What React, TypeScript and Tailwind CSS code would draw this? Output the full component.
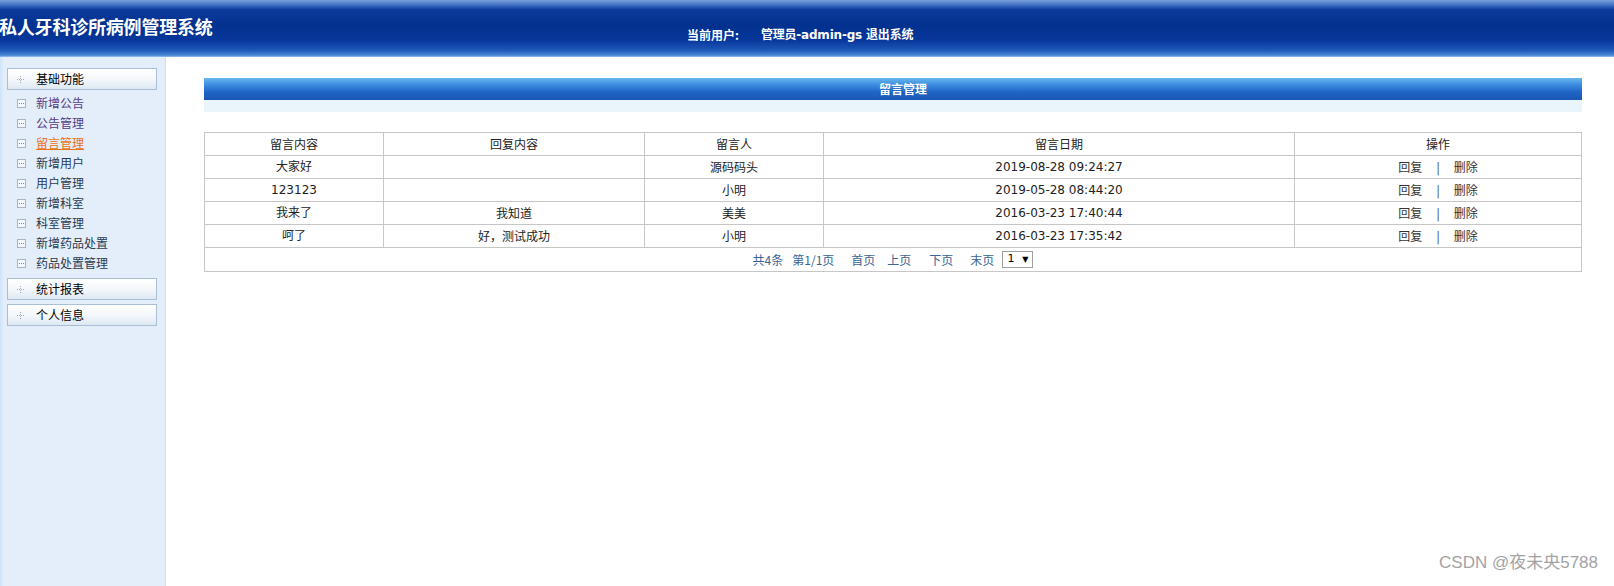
import React from "react";

const menuItems: { label: string; cls: string }[] = [
  { label: "新增公告", cls: "text-[#553c86]" },
  { label: "公告管理", cls: "text-[#553c86]" },
  { label: "留言管理", cls: "text-[#e8731a] underline" },
  { label: "新增用户", cls: "text-[#2b3a4f]" },
  { label: "用户管理", cls: "text-[#2b3a4f]" },
  { label: "新增科室", cls: "text-[#2b3a4f]" },
  { label: "科室管理", cls: "text-[#2b3a4f]" },
  { label: "新增药品处置", cls: "text-[#2b3a4f]" },
  { label: "药品处置管理", cls: "text-[#2b3a4f]" },
];

const rows = [
  { c: "大家好", r: "", p: "源码码头", d: "2019-08-28 09:24:27" },
  { c: "123123", r: "", p: "小明", d: "2019-05-28 08:44:20" },
  { c: "我来了", r: "我知道", p: "美美", d: "2016-03-23 17:40:44" },
  { c: "呵了", r: "好，测试成功", p: "小明", d: "2016-03-23 17:35:42" },
];

function PlusIcon() {
  return (
    <svg width="9" height="9" viewBox="0 0 9 9" className="shrink-0">
      <g fill="#a2aebb">
        <rect x="4" y="1" width="1" height="1" />
        <rect x="4" y="3" width="1" height="1" />
        <rect x="4" y="5" width="1" height="1" />
        <rect x="4" y="7" width="1" height="1" />
        <rect x="1" y="4" width="1" height="1" />
        <rect x="3" y="4" width="1" height="1" />
        <rect x="5" y="4" width="1" height="1" />
        <rect x="7" y="4" width="1" height="1" />
      </g>
    </svg>
  );
}

function LeafIcon() {
  return (
    <svg width="9" height="9" viewBox="0 0 9 9" className="shrink-0">
      <rect x="0.5" y="0.5" width="8" height="8" fill="#f4f8fc" stroke="#a6b4c4" />
      <g fill="#7a8898">
        <rect x="2" y="4" width="1" height="1" />
        <rect x="4" y="4" width="1" height="1" />
        <rect x="6" y="4" width="1" height="1" />
      </g>
    </svg>
  );
}

function GroupHeader({ label }: { label: string }) {
  return (
    <div className="ml-[7px] flex h-[22px] w-[150px] items-center border border-[#a8bfd6] bg-[linear-gradient(to_bottom,#ffffff_0%,#f3f7fb_55%,#dde8f3_100%)] pl-[8px] text-[12px] text-black">
      <PlusIcon />
      <span className="ml-[11px]">{label}</span>
    </div>
  );
}

export default function App() {
  const cjk = "font-['Noto_Sans_CJK_SC','Noto_Sans',sans-serif]";
  return (
    <div className={`relative flex h-[586px] w-[1614px] flex-col overflow-hidden bg-white ${cjk}`}>
      {/* Header */}
      <div className="relative h-[57px] shrink-0 bg-[linear-gradient(to_bottom,#7aa1dc_0%,#4575c4_8%,#0b3a9c_17%,#02318f_45%,#06369a_70%,#1d58b8_88%,#4a86d6_97%,#9ec2ec_100%)]">
        <div className="absolute left-[-1px] top-[14px] text-[18px] font-bold leading-[24px] tracking-[-0.2px] text-white">
          私人牙科诊所病例管理系统
        </div>
        <div className="absolute left-[687px] top-[27px] flex text-[12px] font-bold leading-[16px] text-white">
          <span>当前用户:</span>
          <span className="ml-[22px] font-['DejaVu_Sans','Noto_Sans_CJK_SC',sans-serif] tracking-[-0.2px]">
            管理员-admin-gs 退出系统
          </span>
        </div>
      </div>

      <div className="flex min-h-0 flex-1">
        {/* Sidebar */}
        <div className="flex w-[166px] shrink-0 border-r border-[#cddff1] bg-[linear-gradient(to_right,#cfe3f7_0px,#e3eefa_4px,#e3eefa_100%)]">
          <div className="flex w-full flex-col pt-[11px]">
            <GroupHeader label="基础功能" />
            <div className="mt-[3px] flex flex-col">
              {menuItems.map((m) => (
                <div key={m.label} className="flex h-[20px] items-center pl-[17px] text-[12px]">
                  <LeafIcon />
                  <span className={`ml-[10px] ${m.cls}`}>{m.label}</span>
                </div>
              ))}
            </div>
            <div className="mt-[5px]">
              <GroupHeader label="统计报表" />
            </div>
            <div className="mt-[4px]">
              <GroupHeader label="个人信息" />
            </div>
          </div>
        </div>

        {/* Main */}
        <div className="flex-1 pl-[38px] pr-[32px] pt-[21px]">
          <div className="flex h-[22px] items-center justify-center bg-[linear-gradient(to_bottom,#69b7ef_0%,#3c8ee0_30%,#1f64c4_65%,#1b57b4_100%)] text-[12px] font-bold text-white">
            <span className="ml-[20px]">留言管理</span>
          </div>
          <div className="h-[12px] bg-[#eaf4fb]" />

          <table className="mt-[20px] w-full table-fixed border-collapse border border-[#c6c6c6] text-[12px] text-[#222]">
            <colgroup>
              <col className="w-[179px]" />
              <col className="w-[261px]" />
              <col className="w-[179px]" />
              <col className="w-[471px]" />
              <col />
            </colgroup>
            <thead>
              <tr className="h-[23px]">
                <th className="border border-[#c6c6c6] p-0 font-normal">留言内容</th>
                <th className="border border-[#c6c6c6] p-0 font-normal">回复内容</th>
                <th className="border border-[#c6c6c6] p-0 font-normal">留言人</th>
                <th className="border border-[#c6c6c6] p-0 font-normal">留言日期</th>
                <th className="border border-[#c6c6c6] p-0 font-normal">操作</th>
              </tr>
            </thead>
            <tbody>
              {rows.map((r, i) => (
                <tr key={i} className="h-[23px] text-center">
                  <td className="border border-[#c6c6c6] p-0 font-['DejaVu_Sans','Noto_Sans_CJK_SC',sans-serif] text-[12px]">
                    {r.c}
                  </td>
                  <td className="border border-[#c6c6c6] p-0">{r.r}</td>
                  <td className="border border-[#c6c6c6] p-0">{r.p}</td>
                  <td className="border border-[#c6c6c6] p-0 font-['DejaVu_Sans',sans-serif] text-[12px]">
                    {r.d}
                  </td>
                  <td className="border border-[#c6c6c6] p-0">
                    <span className="inline-flex items-center gap-[14px] text-[#333]">
                      <span>回复</span>
                      <span className="text-[#333]">|</span>
                      <span>删除</span>
                    </span>
                  </td>
                </tr>
              ))}
              <tr className="h-[24px]">
                <td colSpan={5} className="border border-[#c6c6c6] p-0">
                  <div className="flex items-center justify-center text-[12px] text-[#3b6494]">
                    <span>共4条</span>
                    <span className="ml-[9px]">第1/1页</span>
                    <span className="ml-[17px]">首页</span>
                    <span className="ml-[12px]">上页</span>
                    <span className="ml-[18px]">下页</span>
                    <span className="ml-[17px]">末页</span>
                    <span className="ml-[8px] flex h-[17px] w-[31px] items-center justify-between border border-[#a0a0a0] bg-white px-[4px] font-['DejaVu_Sans',sans-serif] text-[11px] text-black">
                      <span>1</span>
                      <span className="text-[8px]">▼</span>
                    </span>
                  </div>
                </td>
              </tr>
            </tbody>
          </table>
        </div>
      </div>

      <div className="absolute bottom-[13px] right-[16px] font-['Liberation_Sans','Noto_Sans_CJK_SC',sans-serif] text-[17px] leading-[20px] text-[#a3a3a3] [text-shadow:0_0_2px_#ffffff]">
        CSDN @夜未央5788
      </div>
    </div>
  );
}
